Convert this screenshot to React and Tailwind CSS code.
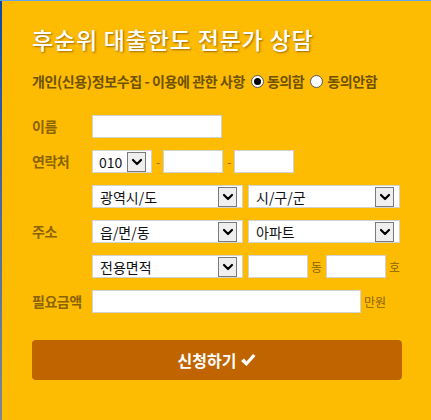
import { ChevronDown } from 'lucide-react';

const font = { fontFamily: '"Noto Sans CJK KR", "Noto Sans", sans-serif' };

const Arrow = () => (
	<div className="flex h-[20px] w-[19px] items-center justify-center border border-[#7a7a7a] bg-[#efefef]">
		<ChevronDown size={16} strokeWidth={3.2} className="text-black" />
	</div>
);

const FakeSelect = ({ value, width }) => (
	<div className={`flex h-[23px] items-center justify-between border border-[#d2d2d2] bg-white pl-[7px] pr-[5px] ${width}`}>
		<span className="text-[14px] leading-none text-[#111]">{value}</span>
		<Arrow />
	</div>
);

const TextBox = ({ width }) => (
	<div className={`h-[23px] border border-[#d2d2d2] bg-white ${width}`} />
);

const Radio = ({ checked }) => (
	<span className="flex h-[13px] w-[13px] items-center justify-center rounded-full border border-[#555] bg-white">
		{checked && <span className="h-[7px] w-[7px] rounded-full bg-black" />}
	</span>
);

const Row = ({ label, children }) => (
	<div className="flex h-[23px] items-center">
		<div className="w-[60px] text-[14px] font-bold tracking-[-0.5px] text-[#8a6400]">{label}</div>
		<div className="flex items-center">{children}</div>
	</div>
);

const Unit = ({ children }) => (
	<span className="ml-[3px] mr-[4px] text-[12px] text-[#8a6400]">{children}</span>
);

export default function App() {
	return (
		<div className="flex h-[420px] w-[431px] border-t border-[#62a8e6] bg-[#fdbb02]" style={font}>
			<div className="w-[2px] bg-gradient-to-b from-[#0b47a6] to-[#7b8894]" />
			<div className="flex flex-1 flex-col pl-[30px]">
				<h1 className="mt-[23px] text-[23px] font-medium leading-[30px] tracking-[0.8px] text-white [text-shadow:1px_1px_2px_rgba(90,50,0,0.6)]">
					후순위 대출한도 전문가 상담
				</h1>
				<div className="mt-[17px] flex items-center text-[14px] font-bold tracking-[-0.4px] text-[#6e5200]">
					<span>개인(신용)정보수집 - 이용에 관한 사항</span>
					<span className="ml-[6px] mr-[3px]"><Radio checked /></span>
					<span>동의함</span>
					<span className="ml-[6px] mr-[4px]"><Radio /></span>
					<span>동의안함</span>
				</div>

				<div className="mt-[23px] flex flex-col gap-[12px]">
					<Row label="이름">
						<TextBox width="w-[130px]" />
					</Row>
					<Row label="연락처">
						<div className="flex h-[23px] w-[60px] items-center justify-between border border-[#d2d2d2] bg-white pl-[6px] pr-[5px]">
							<span className="text-[14px] leading-none text-[#111]">010</span>
							<Arrow />
						</div>
						<span className="ml-[4px] mr-[3px] text-[12px] text-[#8a6400]">-</span>
						<TextBox width="w-[60px]" />
						<span className="ml-[4px] mr-[3px] text-[12px] text-[#8a6400]">-</span>
						<TextBox width="w-[60px]" />
					</Row>
					<Row label="">
						<FakeSelect value="광역시/도" width="w-[151px]" />
						<div className="w-[5px]" />
						<FakeSelect value="시/구/군" width="w-[152px]" />
					</Row>
					<Row label="주소">
						<FakeSelect value="읍/면/동" width="w-[151px]" />
						<div className="w-[5px]" />
						<FakeSelect value="아파트" width="w-[152px]" />
					</Row>
					<Row label="">
						<FakeSelect value="전용면적" width="w-[151px]" />
						<div className="w-[5px]" />
						<TextBox width="w-[60px]" />
						<Unit>동</Unit>
						<TextBox width="w-[60px]" />
						<Unit>호</Unit>
					</Row>
					<Row label="필요금액">
						<TextBox width="w-[269px]" />
						<Unit>만원</Unit>
					</Row>
				</div>

				<button className="mt-[27px] flex h-[40px] w-[370px] items-center justify-center gap-[4px] rounded-[4px] bg-[#c06400] text-[16px] font-bold text-white">
					신청하기
					<svg width="16" height="14" viewBox="0 0 16 14">
						<path d="M1 8 L4 5.5 L6.5 8.5 L13 1 L15.5 3 L6.5 13 Z" fill="white" />
					</svg>
				</button>
			</div>
		</div>
	);
}
